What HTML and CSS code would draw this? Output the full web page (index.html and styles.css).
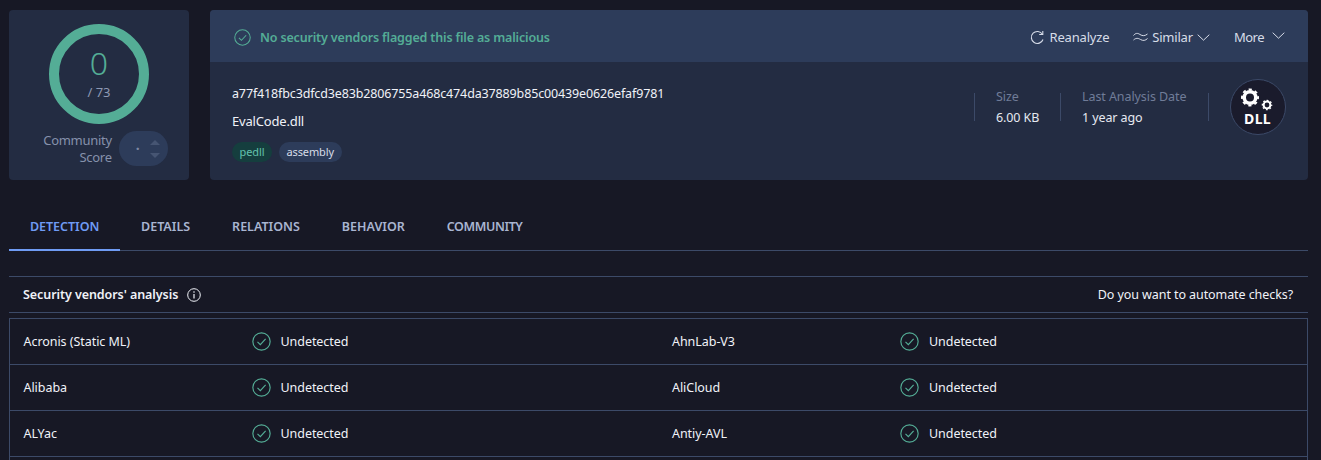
FILE: index.html
```html
<!DOCTYPE html>
<html lang="en">
<head>
<meta charset="utf-8">
<title>EvalCode.dll</title>
<link rel="stylesheet" href="styles.css">
</head>
<body>
<svg class="defs" width="0" height="0" aria-hidden="true">
  <symbol id="check" viewBox="0 0 18 18">
    <circle cx="9" cy="9" r="8.2" fill="none" stroke="currentColor" stroke-width="1.1"/>
    <path d="M5.2 9.3l2.7 2.7 5-5.4" fill="none" stroke="currentColor" stroke-width="1.1"/>
  </symbol>
</svg>
<main class="page">
  <section class="top">
    <div class="score card">
      <div class="ring">
        <svg class="ring-svg" viewBox="0 0 100 100" aria-hidden="true"><circle cx="50" cy="50" r="45" fill="none" stroke="#54ad96" stroke-width="10"/></svg>
        <span class="ring-num">0</span>
        <span class="ring-total">/ 73</span>
      </div>
      <div class="community">
        <div class="community-label">Community<br>Score</div>
        <div class="vote">
          <span class="vote-dot">&middot;</span>
          <span class="vote-arrows">
            <svg width="12" height="7" viewBox="0 0 12 7" aria-hidden="true"><path d="M6 1l5 5H1z" fill="#465573"/></svg>
            <svg width="12" height="7" viewBox="0 0 12 7" aria-hidden="true"><path d="M1 1h10L6 6z" fill="#465573"/></svg>
          </span>
        </div>
      </div>
    </div>
    <div class="summary card">
      <header class="banner">
        <div class="verdict">
          <svg class="verdict-icon"><use href="#check"/></svg>
          <span>No security vendors flagged this file as malicious</span>
        </div>
        <nav class="actions">
          <span class="action">
            <svg width="14" height="15" viewBox="0 0 14 15" aria-hidden="true"><path d="M12.4 4.2A6 6 0 1 0 13 9.5" fill="none" stroke="currentColor" stroke-width="1.1"/><path d="M9.2 4.5h3.6V1" fill="none" stroke="currentColor" stroke-width="1.1"/></svg>
            Reanalyze
          </span>
          <span class="action action-similar">
            <svg width="15" height="10" viewBox="0 0 15 10" aria-hidden="true"><path d="M.5 3.500C2.500 1 4.500 .8 7 2.500s5 1.500 7.500-.5M.5 8C3 5.800 5 6 7.500 7.500s5 1.200 7-1" fill="none" stroke="currentColor" stroke-width="1"/></svg>
            Similar
            <svg class="chev" width="13" height="7" viewBox="0 0 13 7" aria-hidden="true"><path d="M.7.7l5.800 5.500L12.300.7" fill="none" stroke="currentColor" stroke-width="1"/></svg>
          </span>
          <span class="action action-more">
            More
            <svg class="chev-up" width="13" height="7" viewBox="0 0 13 7" aria-hidden="true"><path d="M.7.7l5.800 5.500L12.300.7" fill="none" stroke="currentColor" stroke-width="1"/></svg>
          </span>
        </nav>
      </header>
      <div class="file">
        <div class="file-main">
          <div class="hash">a77f418fbc3dfcd3e83b2806755a468c474da37889b85c00439e0626efaf9781</div>
          <div class="name">EvalCode.dll</div>
          <div class="tags">
            <span class="tag tag-green">pedll</span>
            <span class="tag">assembly</span>
          </div>
        </div>
        <div class="meta">
          <div class="meta-item meta-size">
            <div class="meta-key">Size</div>
            <div class="meta-val">6.00 KB</div>
          </div>
          <div class="meta-item meta-date">
            <div class="meta-key">Last Analysis Date</div>
            <div class="meta-val">1 year ago</div>
          </div>
          <div class="meta-icon">
            <div class="dll">
              <svg width="31" height="22" viewBox="0 0 31 22" aria-hidden="true">
                <circle cx="9" cy="9.500" r="5.800" fill="none" stroke="#fff" stroke-width="3.600"/>
                <circle cx="9" cy="9.500" r="8" fill="none" stroke="#fff" stroke-width="2" stroke-dasharray="3.200 3.083" stroke-dashoffset="1.600"/>
                <circle cx="26" cy="17" r="3.400" fill="none" stroke="#fff" stroke-width="2"/>
                <circle cx="26" cy="17" r="4.600" fill="none" stroke="#fff" stroke-width="1.400" stroke-dasharray="1.800 1.813" stroke-dashoffset="0.900"/>
              </svg>
              <span class="dll-text">DLL</span>
            </div>
          </div>
        </div>
      </div>
    </div>
  </section>

  <nav class="tabs">
    <span class="tab tab-active">DETECTION</span>
    <span class="tab">DETAILS</span>
    <span class="tab">RELATIONS</span>
    <span class="tab">BEHAVIOR</span>
    <span class="tab tab-last">COMMUNITY</span>
  </nav>

  <section class="analysis">
    <header class="analysis-head">
      <div class="analysis-title">
        <span>Security vendors' analysis</span>
        <svg width="14" height="14" viewBox="0 0 14 14" aria-hidden="true"><circle cx="7" cy="7" r="6.300" fill="none" stroke="currentColor" stroke-width="1"/><path d="M7 6v4.500" stroke="currentColor" stroke-width="1.200"/><circle cx="7" cy="4" r=".8" fill="currentColor"/></svg>
      </div>
      <div class="automate">Do you want to automate checks?</div>
    </header>
    <div class="vendors">
      <div class="row">
        <div class="cell"><span class="vendor">Acronis (Static ML)</span><span class="status"><svg class="status-icon"><use href="#check"/></svg>Undetected</span></div>
        <div class="cell"><span class="vendor">AhnLab-V3</span><span class="status"><svg class="status-icon"><use href="#check"/></svg>Undetected</span></div>
      </div>
      <div class="row">
        <div class="cell"><span class="vendor">Alibaba</span><span class="status"><svg class="status-icon"><use href="#check"/></svg>Undetected</span></div>
        <div class="cell"><span class="vendor">AliCloud</span><span class="status"><svg class="status-icon"><use href="#check"/></svg>Undetected</span></div>
      </div>
      <div class="row">
        <div class="cell"><span class="vendor">ALYac</span><span class="status"><svg class="status-icon"><use href="#check"/></svg>Undetected</span></div>
        <div class="cell"><span class="vendor">Antiy-AVL</span><span class="status"><svg class="status-icon"><use href="#check"/></svg>Undetected</span></div>
      </div>
      <div class="row row-empty"></div>
    </div>
  </section>
</main>
</body>
</html>
```
FILE: styles.css
```css
* { box-sizing: border-box; }
html, body { height: 100%; }
body {
  margin: 0;
  overflow: hidden;
  background: #171825;
  color: #f0f2f8;
  font-family: "Noto Sans", "Open Sans", sans-serif;
  font-size: 13px;
}
.defs { display: block; height: 0; }
.page { padding: 10px 13px 0 9px; }

.top { display: flex; gap: 21px; height: 170px; }
.card { background: #232c42; border-radius: 4px; overflow: hidden; }

.score { width: 180px; flex: none; display: flex; flex-direction: column; align-items: center; padding-top: 14px; }
.ring { width: 100px; height: 100px; display: flex; flex-direction: column; align-items: center; position: relative; }
.ring-svg { position: absolute; inset: 0; width: 100px; height: 100px; }
.ring-num { margin-top: 19px; font-size: 32px; line-height: 40px; color: #54ad96; font-weight: 300; }
.ring-total { font-size: 13px; line-height: 18px; color: #8e99b3; }
.community { display: flex; gap: 7px; margin-top: 7px; padding-left: 13px; align-items: center; }
.community-label { text-align: right; font-size: 13px; line-height: 17px; color: #8691ab; letter-spacing: -0.3px; }
.vote { width: 49px; height: 35px; border-radius: 18px; background: #2d3c5a; display: flex; align-items: center; padding-left: 17px; gap: 9px; }
.vote-dot { color: #7d88a3; font-size: 14px; line-height: 14px; font-weight: 700; }
.vote-arrows { display: flex; flex-direction: column; gap: 6px; }
.vote-arrows svg { display: block; }

.summary { flex: 1; display: flex; flex-direction: column; }
.banner { height: 52px; background: #2d3c5a; display: flex; align-items: center; justify-content: space-between; padding: 2px 23px 0 24px; }
.verdict { display: flex; align-items: center; gap: 9px; color: #54ad96; font-weight: 600; font-size: 12.500px; letter-spacing: -0.16px; }
.verdict-icon { width: 17px; height: 17px; }
.actions { display: flex; align-items: center; gap: 24px; color: #d7dce8; }
.action { display: flex; align-items: center; gap: 6px; font-size: 13px; letter-spacing: -0.2px; }
.action-similar { gap: 4px; }
.chev { margin-left: 0; }
.action-more { gap: 8px; letter-spacing: -0.5px; }
.chev-up { position: relative; top: -2px; }

.file { flex: 1; display: flex; justify-content: space-between; padding: 22px 22px 0 22px; }
.hash { font-size: 12.500px; line-height: 20px; letter-spacing: -0.14px; }
.name { font-size: 13px; line-height: 20px; margin-top: 7px; letter-spacing: -0.17px; }
.tags { display: flex; gap: 7px; margin-top: 11px; }
.tag { height: 20px; line-height: 20px; border-radius: 10px; padding: 0 7.500px; background: #2d3c5a; color: #d7dce8; font-size: 11px; letter-spacing: -0.1px; }
.tag-green { background: #153e3e; color: #62c2ac; }

.meta { display: flex; align-items: flex-start; padding-top: 7px; }
.meta-item { height: 28px; margin-top: 2px; border-left: 1px solid #3c4a68; padding-left: 21px; }
.meta-size { width: 86px; }
.meta-date { width: 148px; }
.meta-key { font-size: 12.500px; line-height: 18px; color: #707c98; margin-top: -5px; letter-spacing: -0.08px; }
.meta-val { font-size: 12.500px; line-height: 18px; margin-top: 3px; color: #e6e9f1; letter-spacing: -0.1px; }
.meta-icon { border-left: 1px solid #3c4a68; height: 28px; margin-top: 2px; padding-left: 21px; display: flex; align-items: center; }
.dll { width: 56px; height: 56px; border-radius: 50%; background: #1a1b2c; border: 1px solid #3c4a68; display: flex; flex-direction: column; align-items: center; padding-top: 8px; flex: none; }
.dll svg { display: block; margin-right: 3px; overflow: visible; }
.dll-text { color: #fff; font-weight: 700; font-size: 14px; line-height: 13px; margin-top: 2px; margin-right: 1px; letter-spacing: 0.3px; }

.tabs { display: flex; height: 49px; margin-top: 22px; border-bottom: 1px solid #3c4a68; }
.tab { padding: 0 21px; line-height: 49px; height: 49px; font-size: 12.500px; font-weight: 600; color: #a9b5d1; }
.tab-active { color: #6f9bf4; border-bottom: 2px solid #6f9bf4; width: 111px; flex: none; letter-spacing: -0.04px; }
.tab-last { letter-spacing: -0.4px; }

.analysis { margin-top: 25px; }
.analysis-head { height: 37px; display: flex; align-items: center; justify-content: space-between; border-top: 1px solid #3c4a68; border-bottom: 1px solid #3c4a68; padding: 0 15px 0 14px; }
.analysis-title { display: flex; align-items: center; gap: 9px; font-weight: 600; font-size: 12.500px; letter-spacing: -0.07px; }
.automate { font-size: 12.500px; letter-spacing: -0.08px; }

.vendors { margin-top: 5px; border: 1px solid #3c4a68; border-bottom: 0; }
.row { display: grid; grid-template-columns: 1fr 1fr; height: 46px; border-bottom: 1px solid #3c4a68; }
.row-empty { height: 20px; border-bottom: 0; }
.cell { display: flex; align-items: center; padding-left: 13.500px; }
.vendor { width: 228px; font-size: 12.500px; letter-spacing: -0.05px; }
.status { display: flex; align-items: center; gap: 10px; font-size: 12.500px; letter-spacing: -0.05px; }
.status-icon { width: 19px; height: 19px; color: #54ad96; }
```
